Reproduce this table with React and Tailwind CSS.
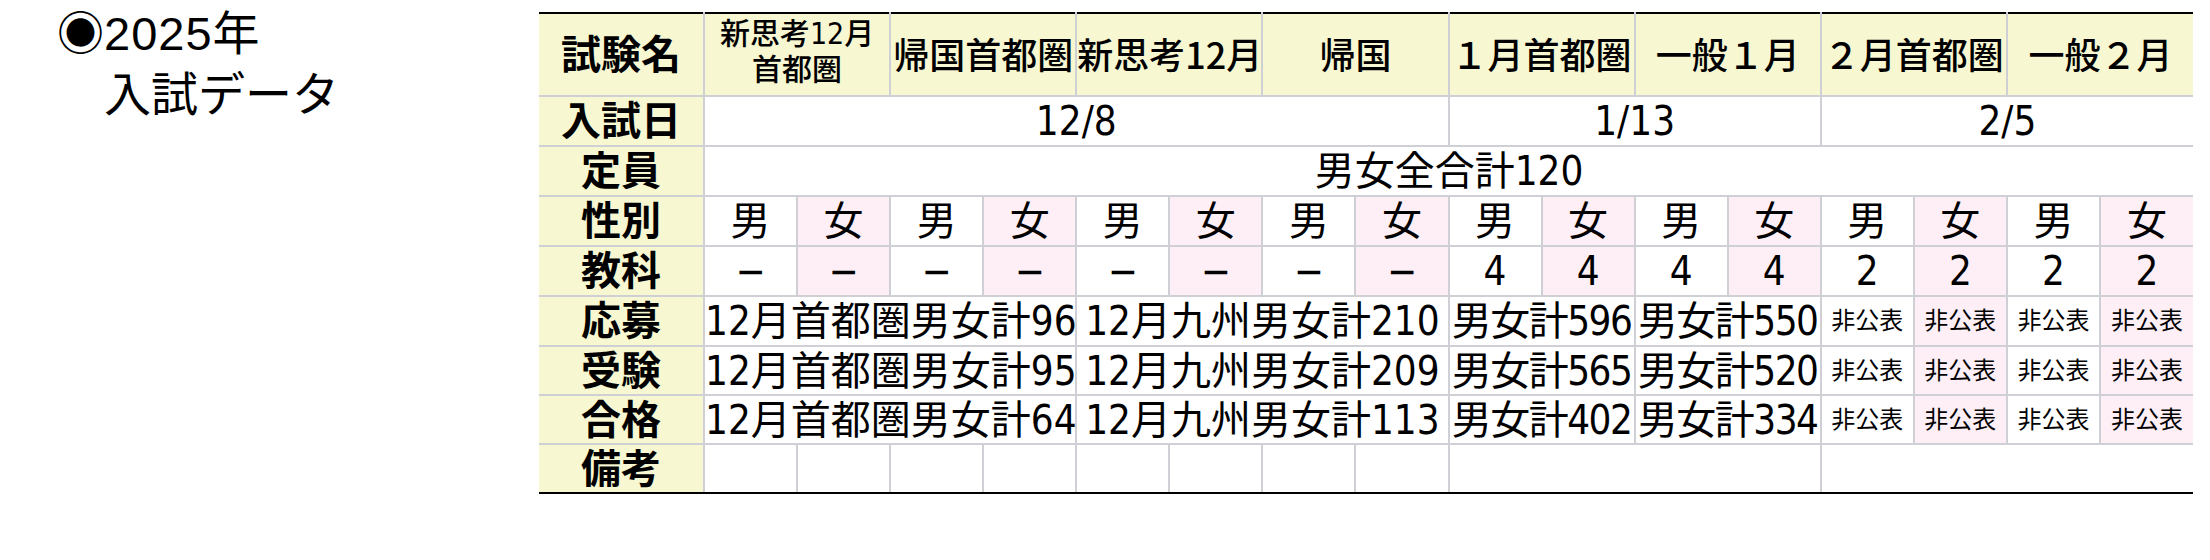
import React from 'react';

const PINK = 'bg-[#fdeff5]';
const YELLOW = 'bg-[#f7f7d2]';

const headers = [
  ['新思考12月', '首都圏'],
  '帰国首都圏',
  '新思考12月',
  '帰国',
  '１月首都圏',
  '一般１月',
  '２月首都圏',
  '一般２月',
];

const subjects = ['−', '−', '−', '−', '−', '−', '−', '−', '4', '4', '4', '4', '2', '2', '2', '2'];

const resultRows = [
  { label: '応募', a: '12月首都圏男女計96', b: '12月九州男女計210', c: '男女計596', d: '男女計550' },
  { label: '受験', a: '12月首都圏男女計95', b: '12月九州男女計209', c: '男女計565', d: '男女計520' },
  { label: '合格', a: '12月首都圏男女計64', b: '12月九州男女計113', c: '男女計402', d: '男女計334' },
];

const cellBorder = 'border-2 border-[#cfd0d5]';

function Label({ children, className = '' }) {
  return (
    <th className={`${YELLOW} ${cellBorder} border-l-0 font-bold text-[40px] leading-none text-black ${className}`}>
      {children}
    </th>
  );
}

function Cell({ children, span = 1, pink = false, className = '' }) {
  return (
    <td
      colSpan={span}
      className={`${pink ? PINK : 'bg-white'} ${cellBorder} text-center align-middle text-black whitespace-nowrap p-0 ${className}`}
    >
      {children}
    </td>
  );
}

export default function App() {
  return (
    <div className="flex bg-white w-[2210px] h-[560px] font-['Liberation_Sans','Noto_Sans_CJK_JP',sans-serif]">
      {/* Title */}
      <div className="w-[539px] shrink-0 pl-[57px] pt-[3px] text-[47px] leading-[61px] text-black">
        <div>
          ◉<span className="tracking-[1px]">2025</span>年
        </div>
        <div>　入試データ</div>
      </div>

      {/* Data table */}
      <div className="pt-[12px]">
        <table className="w-[1654px] table-fixed border-collapse border-t-2 border-b-2 border-t-black border-b-black font-['DejaVu_Sans_Condensed','Noto_Sans_CJK_JP',sans-serif] text-[40px] leading-none">
          <colgroup>
            <col className="w-[165px]" />
            {Array.from({ length: 16 }).map((_, i) => (
              <col key={i} />
            ))}
          </colgroup>
          <tbody>
            <tr className="h-[83px]">
              <Label className="border-t-black border-t-2">試験名</Label>
              {headers.map((h, i) => (
                <td
                  key={i}
                  colSpan={2}
                  className={`${YELLOW} ${cellBorder} border-t-black text-center align-middle whitespace-nowrap p-0 text-black font-medium ${i === 7 ? 'border-r-0' : ''}`}
                >
                  {Array.isArray(h) ? (
                    <div className="text-[30px] leading-[36px] -mt-[6px]">
                      <div>{h[0]}</div>
                      <div>{h[1]}</div>
                    </div>
                  ) : (
                    <span className="text-[36px] font-['Noto_Sans_CJK_JP',sans-serif]">{h}</span>
                  )}
                </td>
              ))}
            </tr>

            <tr className="h-[50px]">
              <Label>入試日</Label>
              <Cell span={8}>12/8</Cell>
              <Cell span={4}>1/13</Cell>
              <Cell span={4} className="border-r-0">2/5</Cell>
            </tr>

            <tr className="h-[50px]">
              <Label>定員</Label>
              <Cell span={16} className="border-r-0">男女全合計120</Cell>
            </tr>

            <tr className="h-[50px]">
              <Label>性別</Label>
              {Array.from({ length: 16 }).map((_, i) => (
                <Cell key={i} pink={i % 2 === 1} className={i === 15 ? 'border-r-0' : ''}>
                  {i % 2 === 0 ? '男' : '女'}
                </Cell>
              ))}
            </tr>

            <tr className="h-[50px]">
              <Label>教科</Label>
              {subjects.map((s, i) => (
                <Cell key={i} pink={i % 2 === 1} className={i === 15 ? 'border-r-0' : ''}>
                  {s}
                </Cell>
              ))}
            </tr>

            {resultRows.map((r, ri) => (
              <tr key={r.label} className={ri === 0 ? 'h-[50px]' : 'h-[49px]'}>
                <Label>{r.label}</Label>
                <Cell span={4}>{r.a}</Cell>
                <Cell span={4}>{r.b}</Cell>
                <Cell span={2} className="tracking-[-1.5px]">{r.c}</Cell>
                <Cell span={2} className="tracking-[-1.5px]">{r.d}</Cell>
                {[0, 1, 2, 3].map((i) => (
                  <Cell key={i} pink={i % 2 === 1} className={`text-[24px] ${i === 3 ? 'border-r-0' : ''}`}>
                    非公表
                  </Cell>
                ))}
              </tr>
            ))}

            <tr className="h-[49px]">
              <Label className="border-b-black">備考</Label>
              {Array.from({ length: 8 }).map((_, i) => (
                <Cell key={i} className="border-b-black" />
              ))}
              <Cell span={4} className="border-b-black" />
              <Cell span={4} className="border-b-black border-r-0" />
            </tr>
          </tbody>
        </table>
      </div>
    </div>
  );
}
